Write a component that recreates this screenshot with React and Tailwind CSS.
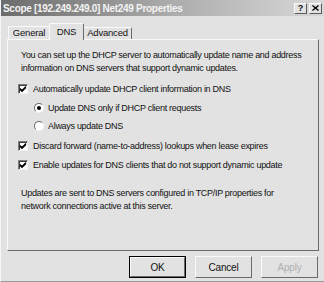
import React from 'react'

const font = { fontFamily: '"Liberation Sans", Arial, sans-serif' }

const Check = ({ on }) => (
  <span className="w-[10px] h-[10px] flex-shrink-0 bg-white border-t border-l border-[#7c7c7c] border-r border-b border-r-[#f2f2f2] border-b-[#f2f2f2] shadow-[inset_1px_1px_0_#404040] flex items-center justify-center">
    {on && (
      <svg width="8" height="8" viewBox="0 0 8 8">
        <path d="M1 3.5 L3 5.5 L7 1.5 M1 4.5 L3 6.5 L7 2.5" stroke="#000" strokeWidth="1.1" fill="none" />
      </svg>
    )}
  </span>
)

const Radio = ({ on }) => (
  <span className="w-[10px] h-[10px] flex-shrink-0 rounded-full bg-white border border-t-[#6a6a6a] border-l-[#6a6a6a] border-r-[#f4f4f4] border-b-[#f4f4f4] flex items-center justify-center">
    {on && <span className="w-[4px] h-[4px] rounded-full bg-black" />}
  </span>
)

const Btn = ({ children, def, off }) => (
  <div className={`w-[57px] h-[22px] flex items-center justify-center text-[10px] tracking-[-0.2px] ${def ? 'border border-black' : 'border border-t-[#fafafa] border-l-[#fafafa] border-r-[#6a6a6a] border-b-[#6a6a6a]'} ${off ? 'text-[#b0b0b0]' : 'text-[#111]'} bg-[#e2e2e2]`}>
    <div className={`w-full h-full flex items-center justify-center ${def ? 'border border-t-[#fafafa] border-l-[#fafafa] border-r-[#6a6a6a] border-b-[#6a6a6a]' : ''}`}>
      {children}
    </div>
  </div>
)

export default function App() {
  return (
    <div className="w-[324px] h-[282px] bg-[#e2e2e2] flex flex-col border-l border-l-[#f6f6f6] border-b border-b-[#9c9c9c] text-[#111]" style={font}>
      {/* title bar */}
      <div className="h-[16px] flex items-center justify-between pl-[2px] pr-[2px] bg-gradient-to-r from-[#6c6c6c] via-[#a9a9a9] to-[#d9d9d9]">
        <span className="text-[10px] font-bold text-[#f4f4f4] tracking-[-0.3px]">Scope [192.249.249.0] Net249 Properties</span>
        <div className="flex gap-[2px] items-center">
          <div className="w-[13px] h-[11px] bg-[#e2e2e2] border border-t-[#fafafa] border-l-[#fafafa] border-r-[#5a5a5a] border-b-[#5a5a5a] flex items-center justify-center text-[9px] font-bold leading-none">?</div>
          <div className="w-[13px] h-[11px] bg-[#e2e2e2] border border-t-[#fafafa] border-l-[#fafafa] border-r-[#5a5a5a] border-b-[#5a5a5a] flex items-center justify-center">
            <svg width="7" height="6" viewBox="0 0 7 6"><path d="M0.5 0.5 L6.5 5.5 M6.5 0.5 L0.5 5.5" stroke="#000" strokeWidth="1.4" /></svg>
          </div>
        </div>
      </div>

      {/* tabs */}
      <div className="h-[23px] flex items-end pl-[7px] text-[9.5px] tracking-[-0.2px]">
        <div className="h-[13px] w-[41px] flex items-center justify-center border-t border-l border-t-[#fafafa] border-l-[#fafafa] rounded-tl-[2px]">General</div>
        <div className="h-[17px] w-[35px] -mb-[1px] z-10 bg-[#e2e2e2] flex items-start justify-center pt-[1px] border-t border-l border-r border-t-[#fafafa] border-l-[#fafafa] border-r-[#6a6a6a] rounded-t-[2px]">DNS</div>
        <div className="h-[12px] w-[48px] flex items-center justify-center border-t border-r border-t-[#fafafa] border-r-[#6a6a6a] rounded-tr-[2px]">Advanced</div>
      </div>

      {/* panel */}
      <div className="ml-[6px] w-[312px] h-[212px] border border-t-[#fafafa] border-l-[#fafafa] border-r-[#6a6a6a] border-b-[#6a6a6a] pl-[13px] pt-[9px] text-[9px] tracking-[-0.3px] leading-[12.5px]">
        <p>You can set up the DHCP server to automatically update name and address<br />information on DNS servers that support dynamic updates.</p>
        <div className="mt-[9px] h-[12px] flex items-center gap-[5px] -ml-[3px]">
          <Check on />
          <span>Automatically update DHCP client information in DNS</span>
        </div>
        <div className="mt-[7px] h-[12px] flex items-center gap-[4px] ml-[13px]">
          <Radio on />
          <span>Update DNS only if DHCP client requests</span>
        </div>
        <div className="mt-[6px] h-[12px] flex items-center gap-[4px] ml-[13px]">
          <Radio />
          <span>Always update DNS</span>
        </div>
        <div className="mt-[8px] h-[12px] flex items-center gap-[5px] -ml-[3px]">
          <Check on />
          <span>Discard forward (name-to-address) lookups when lease expires</span>
        </div>
        <div className="mt-[7px] h-[12px] flex items-center gap-[5px] -ml-[3px]">
          <Check on />
          <span>Enable updates for DNS clients that do not support dynamic update</span>
        </div>
        <p className="mt-[16px] leading-[13px]">Updates are sent to DNS servers configured in TCP/IP properties for<br />network connections active at this server.</p>
      </div>

      {/* buttons */}
      <div className="mt-[5px] flex justify-end gap-[9px] pr-[6px]">
        <Btn def>OK</Btn>
        <Btn>Cancel</Btn>
        <Btn off>Apply</Btn>
      </div>
    </div>
  )
}
